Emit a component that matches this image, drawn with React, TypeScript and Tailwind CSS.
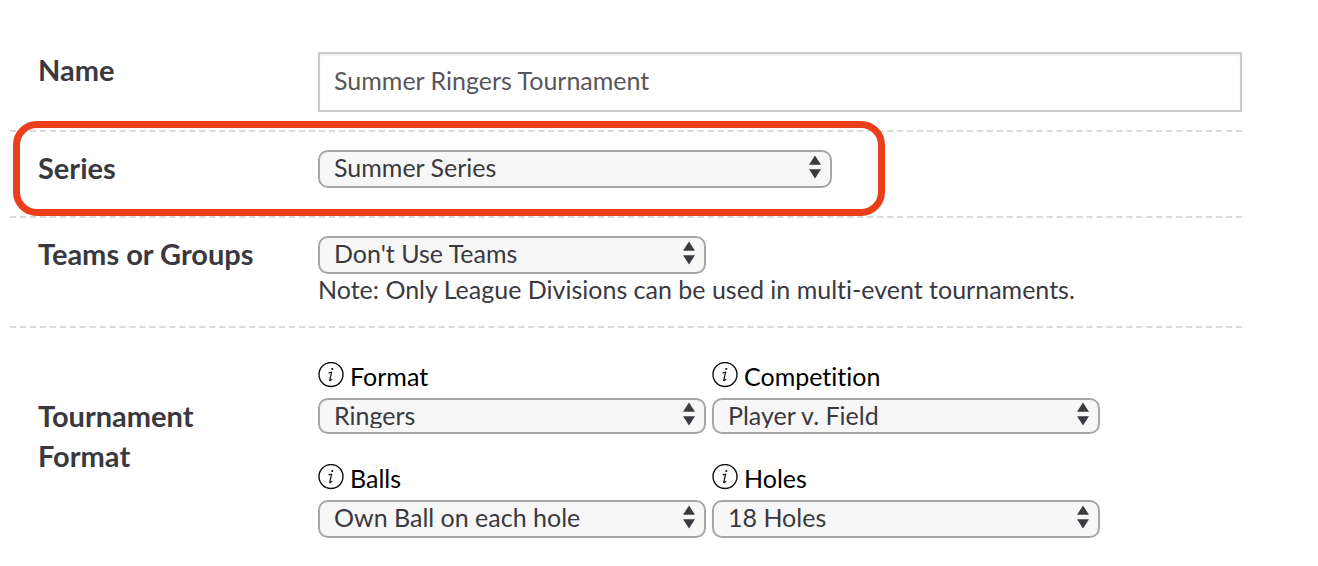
import React, { useId, useState } from "react";

type SelectProps = {
  id: string;
  options: string[];
  className: string;
};

const Select: React.FC<SelectProps> = ({ id, options, className }) => {
  const [value, setValue] = useState(options[0]);
  return (
    <div className={`relative max-w-full ${className}`}>
      <select
        id={id}
        value={value}
        onChange={(e) => setValue(e.target.value)}
        className="block h-full w-full appearance-none rounded-[10px] border-2 border-[#a6a6a6] bg-[#f7f7f7] pr-9 pb-1 pl-[14px] text-[25px] leading-[30px] text-[#3a393f]"
      >
        {options.map((option) => (
          <option key={option}>{option}</option>
        ))}
      </select>
      <div className="pointer-events-none absolute inset-y-0 right-[10px] flex items-center pb-1">
        <svg width="14" height="24" viewBox="0 0 14 24" fill="#3c3b42">
          <path d="M7 0.5 13 9.8H1z" />
          <path d="M1 14.2H13L7 23.5z" />
        </svg>
      </div>
    </div>
  );
};

const InfoIcon: React.FC = () => (
  <svg width="26" height="26" viewBox="0 0 26 26" fill="none">
    <circle cx="13" cy="12.500" r="12" stroke="#111" strokeWidth="1.4" />
    <circle cx="14.3" cy="7" r="1.1" fill="#111" />
    <path
      d="M11 10.900c1.100-.3 1.900-.6 2.700-.9l-1.900 7.900c-.2 1 .3 1 2-.5"
      stroke="#111"
      strokeWidth="1.2"
      strokeLinecap="round"
      strokeLinejoin="round"
    />
  </svg>
);

type FormatFieldProps = {
  label: string;
  options: string[];
  className: string;
};

const FormatField: React.FC<FormatFieldProps> = ({
  label,
  options,
  className,
}) => {
  const id = useId();
  return (
    <div className="w-[388px] max-w-full">
      <div className="flex h-9 items-start gap-[6px]">
        <InfoIcon />
        <label htmlFor={id} className="text-[25px] leading-7 text-black">
          {label}
        </label>
      </div>
      <Select id={id} options={options} className={className} />
    </div>
  );
};

const labelClass = "w-[280px] shrink-0 text-[29px] font-bold text-[#3a393f]";
const rowClass =
  "relative flex items-start border-b-2 border-dashed border-[#dadada] pl-7";

const App: React.FC = () => {
  const [name, setName] = useState("Summer Ringers Tournament");
  return (
    <form className="bg-white pr-[76px] pb-7 pl-[10px] font-['Lato',sans-serif] text-[#3a393f] [font-variant-ligatures:none]">
      <div className={`${rowClass} pt-[52px] pb-[18px]`}>
        <label htmlFor="name" className={`${labelClass} leading-9`}>
          Name
        </label>
        <input
          id="name"
          type="text"
          value={name}
          onChange={(e) => setName(e.target.value)}
          className="h-[60px] min-w-0 flex-1 border-2 border-[#cccccc] bg-white px-[14px] pb-1 text-[25px] text-[#57565b] shadow-[inset_0_2px_2px_rgba(0,0,0,0.06)]"
        />
      </div>

      <div className={`${rowClass} pt-[18px] pb-7`}>
        <label htmlFor="series" className={`${labelClass} leading-9`}>
          Series
        </label>
        <Select
          id="series"
          options={["Summer Series", "No Series"]}
          className="h-[38px] w-[514px]"
        />
        {/* callout around the series row */}
        <div className="pointer-events-none absolute -top-[11px] bottom-0 left-[3px] w-[872px] max-w-full rounded-[24px] border-[7px] border-[#ea3f1a]" />
      </div>

      <div className={`${rowClass} pt-[18px] pb-[22px]`}>
        <label htmlFor="teams" className={`${labelClass} leading-9`}>
          Teams or Groups
        </label>
        <div className="min-w-0 flex-1">
          <Select
            id="teams"
            options={["Don't Use Teams", "Use Teams", "Use Groups"]}
            className="h-[38px] w-[388px]"
          />
          <p className="text-[25px] leading-[30px]">
            Note: Only League Divisions can be used in multi-event tournaments.
          </p>
        </div>
      </div>

      <fieldset className="flex items-start pt-[34px] pl-7">
        <div className={`${labelClass} pt-[34px] pr-14 leading-10`}>
          Tournament Format
        </div>
        <div className="flex min-w-0 flex-1 flex-col gap-[30px]">
          <div className="flex flex-wrap gap-[6px]">
            <FormatField
              label="Format"
              options={["Ringers", "Stroke Play", "Match Play"]}
              className="h-9"
            />
            <FormatField
              label="Competition"
              options={["Player v. Field", "Player v. Player"]}
              className="h-9"
            />
          </div>
          <div className="flex flex-wrap gap-[6px]">
            <FormatField
              label="Balls"
              options={["Own Ball on each hole", "Best Ball"]}
              className="h-[38px]"
            />
            <FormatField
              label="Holes"
              options={["18 Holes", "9 Holes"]}
              className="h-[38px]"
            />
          </div>
        </div>
      </fieldset>
    </form>
  );
};

export default App;
